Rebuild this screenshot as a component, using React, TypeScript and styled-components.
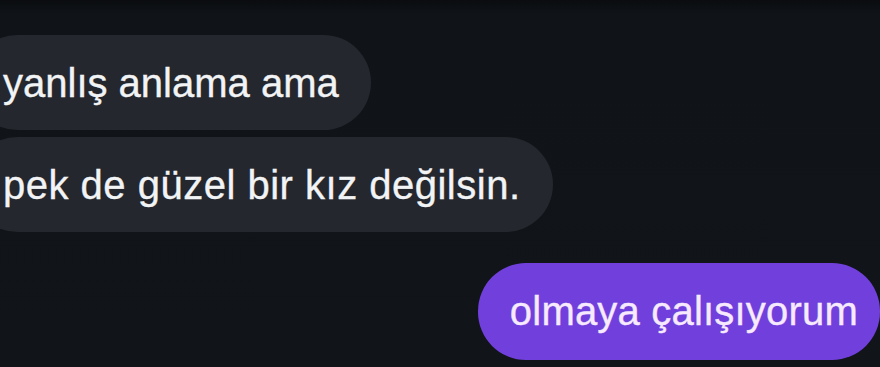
import styled, { createGlobalStyle } from "styled-components";

const Global = createGlobalStyle`
  html, body {
    margin: 0;
    padding: 0;
    background: #111419;
    overflow: hidden;
  }
`;

const Screen = styled.div`
  width: 880px;
  height: 367px;
  background: linear-gradient(#0a0c0f 0, #101318 14px, #111419 100%);
  display: flex;
  flex-direction: column;
  padding-top: 35px;
  box-sizing: border-box;
  overflow: hidden;
`;

const Incoming = styled.div`
  display: flex;
  flex-direction: column;
  align-items: flex-start;
  gap: 7px;
  margin-left: -30px;
`;

const Outgoing = styled.div`
  display: flex;
  justify-content: flex-end;
  margin-top: 31px;
`;

const Bubble = styled.div<{ $mine?: boolean; $track?: number }>`
  font-family: "Liberation Sans", Arial, sans-serif;
  font-size: 40px;
  line-height: 48px;
  letter-spacing: ${(p) => p.$track ?? 0}px;
  -webkit-text-stroke: 0.35px currentColor;
  padding: ${(p) => (p.$mine ? "24px 22px 25px 32px" : "24px 32px 23px 33px")};
  border-radius: 48px;
  white-space: nowrap;
  background: ${(p) => (p.$mine ? "#7140dc" : "#24272d")};
  color: ${(p) => (p.$mine ? "#f7eaff" : "#f2f3f5")};
`;

export default function App() {
  return (
    <Screen>
      <Global />
      <Incoming>
        <Bubble>yanlış anlama ama</Bubble>
        <Bubble $track={0.5}>pek de güzel bir kız değilsin.</Bubble>
      </Incoming>
      <Outgoing>
        <Bubble $mine $track={0.2}>
          olmaya çalışıyorum
        </Bubble>
      </Outgoing>
    </Screen>
  );
}
